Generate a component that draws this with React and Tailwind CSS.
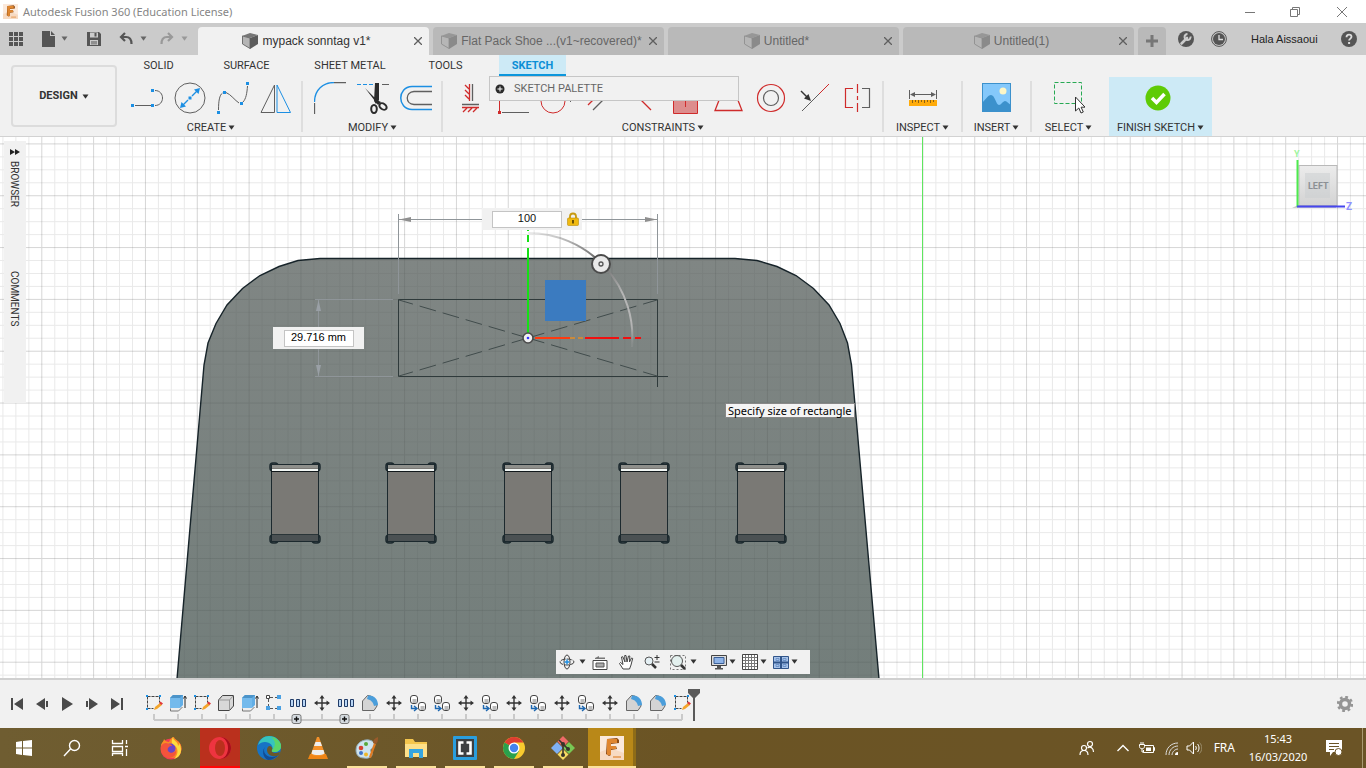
import React from "react";

const GREY = "#5f5f5f";
const BLUE = "#1c8fe3";
const RED = "#cf2b2b";

const Caret = ({ className = "text-[#333]" }) => (
  <svg width="7" height="6" viewBox="0 0 7 6" className={`shrink-0 ${className}`}>
    <path d="M.5 .5h6L3.500 4.800z" fill="currentColor" />
  </svg>
);

const Svg = ({ size = 32, children }) => (
  <svg width={size} height={size} viewBox={`0 0 ${size} ${size}`} fill="none" className="shrink-0" aria-hidden="true">
    {children}
  </svg>
);

const Dot = ({ x, y, fill = BLUE }) => <rect x={x - 1.5} y={y - 1.5} width="3" height="3" fill={fill} />;

/* ---------- title bar ---------- */

const FusionLogo = ({ size }) => (
  <svg width={size} height={size} viewBox="0 0 24 24" aria-hidden="true">
    <rect width="24" height="24" fill="#fbe9db" />
    <path d="M0 16l10-4 14 5v7H0z" fill="#f7dac2" />
    <path d="M7 3l10-1 2 2v3l-8 1v2h5l1 3-6 1v5l-2 1-3-2z" fill="#8d4a12" />
    <path d="M7 3h10v4h-6v3h5v3h-5v6H7z" fill="#e0862f" />
    <path d="M13 20h8v2h-8z" fill="#e9a76c" />
  </svg>
);

const TitleBar = () => (
  <header className="flex h-[23px] shrink-0 items-center bg-white pl-[3px]">
    <FusionLogo size={15} />
    <h1 className="ml-[5px] font-['Noto_Sans',sans-serif] text-[11px] leading-4 text-[#858585]">
      Autodesk Fusion 360 (Education License)
    </h1>
    <div className="ml-auto flex h-5 text-[#777]">
      <button aria-label="Minimize" className="flex w-[45px] items-center justify-center">
        <Svg size={12}><path d="M1 6.500h10" stroke="currentColor" /></Svg>
      </button>
      <button aria-label="Restore" className="flex w-[45px] items-center justify-center">
        <Svg size={12}><path d="M1.500 3.500h7v7h-7zM3.500 3.500v-2h7v7h-2" stroke="currentColor" /></Svg>
      </button>
      <button aria-label="Close" className="flex w-[49px] items-center justify-center">
        <Svg size={12}><path d="M1 1l10 10M11 1L1 11" stroke="currentColor" /></Svg>
      </button>
    </div>
  </header>
);

/* ---------- document tabs ---------- */

const Cube = () => (
  <Svg size={16}>
    <path d="M0 3l8-3 8 2-8 3z" fill="#777" />
    <path d="M.5 3l7.500 2v10.500l-7.500-4.500z" fill="#b5b5b5" stroke="#6f6f6f" />
    <path d="M8 5l8-3v9l-8 5z" fill="#5c5c5c" />
  </Svg>
);

const tabs = [
  { name: "mypack sonntag v1*", active: true },
  { name: "Flat Pack Shoe ...(v1~recovered)*" },
  { name: "Untitled*" },
  { name: "Untitled(1)" },
];

const AppBar = () => (
  <div className="flex h-8 shrink-0 bg-[#cbcbcb]">
    <div className="flex w-[198px] shrink-0 items-center pb-2 pl-2 pt-2 text-[#555]">
      <button aria-label="Data panel">
        <Svg size={16}>
          {[1, 6, 11].map((y) => [1, 6, 11].map((x) => <rect key={`${x}-${y}`} x={x} y={y} width="4" height="4" fill="#555" />))}
        </Svg>
      </button>
      <button aria-label="File" className="ml-4 flex items-center gap-[5px]">
        <Svg size={16}><path d="M2 0h8v5h5v11H2zM11 0l4 4h-4z" fill="#555" /></Svg>
        <Caret className="text-[#666]" />
      </button>
      <button aria-label="Save" className="ml-[18px]">
        <Svg size={16}>
          <path d="M1 1h12l2 2v12H1z" fill="#555" />
          <path d="M4 1.500h8v5H4zM4 9h8v5H4z" fill="#cbcbcb" />
          <path d="M8.500 2h2v3.500h-2zM5 10.500h6v1H5zM5 12.500h6v.8H5z" fill="#555" />
        </Svg>
      </button>
      <button aria-label="Undo" className="ml-4 flex items-center gap-[6px]">
        <Svg size={16}><path d="M7 2L3 6l4 4M3 6h5c4 0 5.500 2.500 5.500 7" stroke="#555" strokeWidth="2.200" /></Svg>
        <Caret className="text-[#666]" />
      </button>
      <button aria-label="Redo" className="ml-3 flex items-center gap-[6px] text-[#999]">
        <Svg size={16}><path d="M9 2l4 4-4 4M13 6H8c-4 0-5.500 2.500-5.500 7" stroke="#999" strokeWidth="2.200" /></Svg>
        <Caret className="text-[#999]" />
      </button>
    </div>
    <div className="flex min-w-0 flex-1 items-end gap-1">
      {tabs.map((t) => (
        <div
          key={t.name}
          className={`flex h-7 min-w-0 flex-1 items-center rounded-t px-1 ${
            t.active ? "bg-[#f1f1f1] text-[#333]" : "bg-[#b9b9b9] text-[#666]"
          }`}
        >
          <button className="flex min-w-0 flex-1 items-center justify-center gap-1 whitespace-nowrap text-[12px]">
            <span className={t.active ? "" : "opacity-50"}><Cube /></span>
            {t.name}
          </button>
          <button aria-label={`Close ${t.name}`} className="px-[3px]">
            <Svg size={8}><path d="M0 0l8 8M8 0L0 8" stroke={GREY} strokeWidth="1.300" /></Svg>
          </button>
        </div>
      ))}
      <button aria-label="New design" className="flex h-7 w-7 shrink-0 items-center justify-center rounded-t bg-[#b9b9b9]">
        <Svg size={14}><path d="M7 1v12M1 7h12" stroke="#777" strokeWidth="3" /></Svg>
      </button>
    </div>
    <div className="flex w-[200px] shrink-0 items-center pl-3 pr-[9px]">
      <button aria-label="Extensions">
        <Svg size={16}>
          <circle cx="8" cy="8" r="8" fill="#555" />
          <path d="M3.500 12.500L9 7" stroke="#cbcbcb" strokeWidth="2.600" strokeLinecap="round" />
          <path d="M12.500 5.500A3 3 0 1 1 9.500 3" stroke="#cbcbcb" strokeWidth="2" />
        </Svg>
      </button>
      <button aria-label="Job status" className="ml-[17px]">
        <Svg size={16}>
          <circle cx="8" cy="8" r="7.400" stroke="#555" />
          <circle cx="8" cy="8" r="6" fill="#555" />
          <path d="M8 4v4.500h4" stroke="#ddd" strokeWidth="1.300" />
        </Svg>
      </button>
      <button className="ml-6 whitespace-nowrap text-[11px] text-[#222]">Hala Aissaoui</button>
      <button aria-label="Help" className="ml-auto">
        <Svg size={16}>
          <circle cx="8" cy="8" r="8" fill="#555" />
          <path d="M5.500 6.300C5.500 4.500 6.600 3.700 8 3.700s2.500.9 2.500 2.100c0 1.700-2.400 1.900-2.400 3.700" stroke="#ddd" strokeWidth="1.800" />
          <path d="M7.100 11h2v2h-2z" fill="#ddd" />
        </Svg>
      </button>
    </div>
  </div>
);

/* ---------- ribbon ---------- */

const createTools = [
  ["Line", <>
    <path d="M4 23.500h16M24 8.500c10 0 10 15 0 15" stroke={GREY} />
    <Dot x={1.5} y={23.5} /><Dot x={21.5} y={23.5} /><Dot x={21.5} y={8.5} />
  </>],
  ["Circle", <>
    <circle cx="16" cy="16" r="15" stroke={GREY} />
    <path d="M9 23l5-5M18 14l5-5" stroke={BLUE} strokeWidth="1.400" />
    <path d="M26 6l-1.500 6L20 7.500zM6 26l1.500-6 4.500 4.500z" fill={BLUE} />
    <Dot x={16} y={16} />
  </>],
  ["Spline", <>
    <path d="M1.500 28c0-9 1-15 4-17M9 10.500c5 2 9 8 13 10.500M26 20c3-3 4-9 4.500-16" stroke={GREY} />
    <Dot x={1.5} y={30.5} /><Dot x={7.5} y={10.5} /><Dot x={24.5} y={21.5} /><Dot x={30.5} y={1.5} />
  </>],
  ["Mirror", <>
    <path d="M14.500 3v27.500H1z" stroke={GREY} />
    <path d="M17 3v27.500h13.500z" stroke={BLUE} />
  </>],
];

const modifyTools = [
  ["Fillet", <>
    <path d="M.5 20C.5 8 9 .5 20 .5" stroke={BLUE} strokeWidth="1.300" />
    <path d="M20 .5h12M.5 21v11" stroke={GREY} strokeWidth="1.300" />
  </>],
  ["Trim", <>
    <path d="M0 2.500h24" stroke={BLUE} strokeDasharray="4 2" />
    <path d="M25 2.500h7" stroke={GREY} />
    <path d="M18 1h4v17l-3 4-2-3zM8 6l12 12 4 2-3 3z" fill="#2b2b2b" />
    <ellipse cx="17" cy="27" rx="2.800" ry="4" stroke="#2b2b2b" strokeWidth="2" />
    <ellipse cx="26" cy="24.500" rx="4" ry="2.800" stroke="#2b2b2b" strokeWidth="2" transform="rotate(35 26 24.500)" />
  </>],
  ["Offset", <>
    <path d="M32 4.500H12C-3 5-3 27 12 27.500h20" stroke={BLUE} strokeWidth="1.500" />
    <path d="M32 9.500H14c-9 .5-9 12.500 0 13h18" stroke={GREY} strokeWidth="1.300" />
  </>],
];

const constraintTools = [
  ["Horizontal/Vertical", <>
    <path d="M15.500 2v17M8 25.500h17M11 3l4 4M11 8l4 4M11 13l4 4M9 30l4-4M14 30l4-4M19 30l4-4" stroke={RED} strokeWidth="1.300" />
    <path d="M18.500 2v17M8 22.500h17" stroke={GREY} strokeWidth="1.300" />
  </>],
  ["Coincident", <>
    <path d="M2.500 0v29" stroke={RED} />
    <path d="M5 30.500h27" stroke={GREY} />
    <Dot x={2.5} y={30.5} fill={RED} />
  </>],
  ["Tangent", <>
    <circle cx="13" cy="19" r="12" stroke={RED} />
    <path d="M28 17l3 3" stroke={GREY} />
  </>],
  ["Equal", <>
    <path d="M5 23L24 4" stroke={RED} strokeWidth="1.200" />
    <path d="M10 28l19-19" stroke={GREY} strokeWidth="1.200" />
  </>],
  ["Parallel", <path d="M6 9l19 19" stroke={RED} strokeWidth="1.200" />],
  ["Perpendicular", <>
    <path d="M4.500 8.500h24v23h-24z" fill="#dd8d8d" stroke={RED} />
    <path d="M16.500 12v13" stroke={RED} />
  </>],
  ["Fix", <path d="M3 28.500h27L22 8H11z" stroke={RED} strokeWidth="1.300" />],
  ["Concentric", <>
    <circle cx="16" cy="16" r="13.500" stroke={RED} strokeWidth="1.200" />
    <circle cx="16" cy="16" r="7.500" stroke={GREY} strokeWidth="1.200" />
  </>],
  ["Midpoint", <>
    <path d="M4 29l17-17" stroke={GREY} />
    <path d="M21 12L31 2" stroke={RED} />
    <path d="M3 9l6 6" stroke="#333" strokeWidth="1.400" />
    <path d="M13 19l-7-2.500 4.500-4.500z" fill="#333" />
  </>],
  ["Symmetry", <>
    <path d="M12 6.500H4.500v19H12M16.500 2v9M16.500 14v4M16.500 21v9" stroke={RED} strokeWidth="1.200" />
    <path d="M21 6.500h7.500v19H21" stroke={GREY} strokeWidth="1.200" />
  </>],
];

const inspectIcon = (
  <>
    <path d="M2.500 8v9M29.500 8v9M4 12.500h24" stroke={GREY} />
    <path d="M3 12.500l5-2.500v5zM29 12.500l-5-2.500v5z" fill={GREY} />
    <rect x="2" y="18" width="28" height="6" fill="#ffab0a" />
    <path d="M5.500 18v3M8.500 18v2M11.500 18v3M14.500 18v2M17.500 18v3M20.500 18v2M23.500 18v3M26.500 18v2" stroke="#8a6014" />
  </>
);

const insertIcon = (
  <>
    <rect x="1" y="1" width="29" height="29" fill="#84c8fb" />
    <path d="M1 21c3-3 6-8 9-8 4 0 5 10 8 10 2 0 4-4 6-4s4 3 6 4v7H1z" fill="#3c91cc" />
    <circle cx="22" cy="9" r="3.500" fill="#fdf6c6" />
    <rect x="1.500" y="1.500" width="28" height="28" stroke="#3c91cc" />
  </>
);

const selectIcon = (
  <>
    <path d="M1.500 .5h27v21h-27z" stroke="#27a953" strokeDasharray="4 2" />
    <path d="M22.500 15v14l3.300-3 2.200 5 2.300-1-2.200-4.800h4z" fill="#fff" stroke="#333" />
  </>
);

const finishIcon = (
  <>
    <circle cx="13" cy="16" r="12.500" fill="#5fcb06" />
    <path d="M7 16l4.500 4.500 8-8.500" stroke="#fff" strokeWidth="3.500" />
  </>
);

const GroupLabel = ({ children }) => (
  <button className="flex h-4 items-center gap-[2px] whitespace-nowrap text-[11px] text-[#333]">
    {children}
    <Caret />
  </button>
);

const ToolGroup = ({ label, tools }) => (
  <div className="ml-[5px] mr-1 flex flex-col items-center pt-[6px]">
    <div className="flex">
      {tools.map(([name, icon]) => (
        <button key={name} aria-label={name} className="flex w-[43px] justify-center">
          <Svg>{icon}</Svg>
        </button>
      ))}
    </div>
    <div className="mt-[6px]"><GroupLabel>{label}</GroupLabel></div>
  </div>
);

const SingleGroup = ({ label, icon, className }) => (
  <div className={`flex flex-col items-center ${className}`}>
    <button aria-label={label}><Svg>{icon}</Svg></button>
    <div className="mt-[6px]"><GroupLabel>{label}</GroupLabel></div>
  </div>
);

const Divider = () => <div className="mb-1 mt-[5px] w-[2px] shrink-0 bg-[#dedede]" />;

const workspaceTabs = [
  ["SOLID", "w-[79px]"],
  ["SURFACE", "w-[97px]"],
  ["SHEET METAL", "w-[110px]"],
  ["TOOLS", "w-[81px]"],
];

const Ribbon = () => (
  <div className="relative flex h-[82px] shrink-0 border-b border-[#d2d2d2] bg-[#f1f1f1] font-['Roboto',sans-serif]">
    <button className="ml-[11px] mt-[10px] flex h-[62px] w-[106px] shrink-0 items-center justify-center gap-1 rounded border-2 border-[#dcdcdc] pt-px text-[11px] font-bold text-[#333]">
      DESIGN <Caret />
    </button>
    <div className="-ml-px flex flex-1 flex-col">
      <nav className="flex h-[21px] pl-[3px] text-[11px] text-[#333]">
        {workspaceTabs.map(([name, w]) => (
          <button key={name} className={`${w} pt-[2px]`}>{name}</button>
        ))}
        <button className="ml-[13px] w-[67px] border-b-2 border-[#0c96dc] bg-[#cdeaf6] pt-[3px] font-bold text-[#0c8fd6]">SKETCH</button>
      </nav>
      <div className="flex h-[60px] pl-1">
        <ToolGroup label="CREATE" tools={createTools} />
        <Divider />
        <ToolGroup label="MODIFY" tools={modifyTools} />
        <Divider />
        <ToolGroup label="CONSTRAINTS" tools={constraintTools} />
        <Divider />
        <SingleGroup label="INSPECT" icon={inspectIcon} className="w-[77px] pt-[6px]" />
        <Divider />
        <SingleGroup label="INSERT" icon={insertIcon} className="w-[67px] pt-[6px]" />
        <Divider />
        <SingleGroup label="SELECT" icon={selectIcon} className="w-[73px] pt-[6px]" />
        <div className="ml-1 mt-px bg-[#cdeaf6]">
          <SingleGroup label="FINISH SKETCH" icon={finishIcon} className="w-[103px] pt-[5px]" />
        </div>
      </div>
    </div>
    <div className="absolute left-[489px] top-[21px] flex h-[25px] w-[250px] items-center border border-[#c6c6c6] bg-[#f1f1f1] pl-[5px] text-[11px] text-[#666]">
      <button aria-label="Expand palette">
        <Svg size={10}>
          <circle cx="5" cy="5" r="4.500" fill="#2b2b2b" />
          <path d="M5 2.500v5M2.500 5h5" stroke="#fff" />
        </Svg>
      </button>
      <span className="ml-[9px] pt-px">SKETCH PALETTE</span>
    </div>
  </div>
);

/* ---------- canvas ---------- */

const slots = [271, 387, 504, 620, 737];

const Slot = ({ x }) => (
  <g transform={`translate(${x} 463)`} stroke="#1c292e">
    <g fill="#4f5c61" strokeWidth="1.500">
      <rect x="-1" y="0" width="8" height="8" rx="3" />
      <rect x="41" y="0" width="8" height="8" rx="3" />
      <rect x="-1" y="72" width="8" height="8" rx="3" />
      <rect x="41" y="72" width="8" height="8" rx="3" />
    </g>
    <rect x=".5" y="1.500" width="47" height="77" fill="#7a7975" />
    <path d="M1 3.500h46" stroke="#8e8f8b" strokeWidth="3" />
    <path d="M1 7h46" stroke="#f2f7f5" strokeWidth="2" />
    <path d="M0 8.500h48" stroke="#11181b" />
    <path d="M1 71h46v7H1z" fill="#4b5153" stroke="none" />
    <path d="M0 71.500h48" strokeOpacity=".7" />
  </g>
);

const Drawing = () => (
  <svg className="block h-full w-full" aria-label="Sketch canvas">
    <defs>
      <pattern id="grid" x="922.400" y="143.400" width="51.830" height="51.830" patternUnits="userSpaceOnUse">
        <path d="M13.450 0v51.830M26.400 0v51.830M39.400 0v51.830M0 13.450h51.830M0 26.400h51.830M0 39.400h51.830" stroke="#000" strokeOpacity=".085" />
        <path d="M.5 0v51.830M0 .5h51.830" stroke="#000" strokeOpacity=".17" />
      </pattern>
      <linearGradient id="body" x1="0" y1="0" x2="0" y2="1">
        <stop offset="0" stopColor="#808684" />
        <stop offset="1" stopColor="#737e7b" />
      </linearGradient>
      <linearGradient id="arc" x1="528" y1="233" x2="632" y2="345" gradientUnits="userSpaceOnUse">
        <stop offset="0" stopColor="#999" stopOpacity=".2" />
        <stop offset=".45" stopColor="#606060" />
        <stop offset=".7" stopColor="#b5b5b5" />
        <stop offset=".9" stopColor="#b5b5b5" />
        <stop offset="1" stopColor="#aaa" stopOpacity=".2" />
      </linearGradient>
    </defs>
    <g transform="translate(0 -137)" fill="none">
      <rect y="137" width="100%" height="100%" fill="url(#grid)" opacity=".5" />
      <path
        d="M177 679L204 365 208 343 216 323.500 227 305 242.500 288.500 260 275.500 279 266.500 298 260.500 320 258.500H735L757 260.500 777 266.500 796 275.500 813.500 288.500 829 305 840 323.500 847.500 343 851.500 365 879 679"
        fill="url(#body)"
        stroke="#17242a"
        strokeWidth="1.400"
      />
      <rect y="137" width="100%" height="100%" fill="url(#grid)" opacity=".5" />
      <path d="M922.500 137v900" stroke="#5fe65f" />
      {slots.map((x) => <Slot key={x} x={x} />)}

      {/* dimensions */}
      <g stroke="#8f9599">
        <path d="M398.500 214v80M657.500 214v80M399 219.500h258M315 299.500h78M315 376.500h78M318.500 300v76" />
      </g>
      <path d="M399 219.500l12-2.500v5zM657 219.500l-12-2.500v5z" fill="#8f8f8f" />
      <path d="M318.500 300l-2.500 11h5zM318.500 376l-2.500-11h5z" fill="#9aa0a6" />

      {/* rectangle in progress */}
      <path d="M398.500 299.500h259v77h-259zM657.500 376v11M657 376.500h11" stroke="#2f3a3b" />
      <path d="M528 338L399 300M528 338l129-38M528 338L399 376M528 338l129 38" stroke="#414c4c" strokeDasharray="17 7" />
      <rect x="545" y="280" width="41" height="41" fill="#3b7bc0" />

      {/* manipulator */}
      <path d="M528 334v-86" stroke="#16e016" strokeWidth="2" />
      <path d="M528 242v-14" stroke="#16e016" strokeWidth="2" strokeDasharray="7 4" />
      <path d="M535 338h35" stroke="#ff3a10" strokeWidth="2" />
      <path d="M570 338h15" stroke="#c98a3c" strokeWidth="2" strokeDasharray="5 3" />
      <path d="M585 338h34M623 338h8M635 338h6" stroke="#f01010" strokeWidth="2" />
      <path d="M528 233A104.500 104.500 0 0 1 632 347" stroke="url(#arc)" strokeWidth="2" />
      <circle cx="601" cy="264" r="9" fill="#e9e9e9" stroke="#4b4b4b" strokeWidth="2" />
      <circle cx="601" cy="264" r="2" stroke="#555" strokeWidth="1.300" />
      <circle cx="528" cy="338" r="5" fill="#eee" stroke="#4b4b4b" strokeWidth="1.600" />
      <circle cx="528" cy="338" r="1.300" fill="#3333ff" />
    </g>
  </svg>
);

const ViewCube = () => (
  <svg width="70" height="70" viewBox="0 0 70 70" className="absolute right-[6px] top-[8px]" fontFamily="Roboto, sans-serif" aria-label="View cube">
    <defs>
      <linearGradient id="cube" x1="0" y1="0" x2="0" y2="1">
        <stop offset="0" stopColor="#ececec" />
        <stop offset="1" stopColor="#d3d3d3" />
      </linearGradient>
    </defs>
    <path d="M2 63h44v-3H8z" fill="#ccc" />
    <rect x="9" y="20.500" width="38" height="40" fill="url(#cube)" stroke="#b9b9b9" />
    <rect x="15" y="28" width="25" height="25" fill="#c9cdd0" fillOpacity=".5" />
    <path d="M7.500 15v47" stroke="#4dea4d" strokeWidth="2" />
    <path d="M7 61.500h48" stroke="#4646ee" strokeWidth="2" />
    <text x="4" y="12" fontSize="9" fontWeight="bold" fill="#9df59d">Y</text>
    <text x="56" y="65" fontSize="10" fontWeight="bold" fill="#9090ff">Z</text>
    <text x="18" y="44" fontSize="9" fontWeight="bold" fill="#8c9094">LEFT</text>
  </svg>
);

const navTools = [
  ["Orbit", <>
    <ellipse cx="8" cy="8" rx="7" ry="3" stroke="#444" strokeDasharray="5 1" />
    <ellipse cx="8" cy="8" rx="3" ry="7" stroke="#444" />
    <path d="M8 5.500v5M5.500 8h5" stroke={BLUE} strokeWidth="1.400" />
  </>, "gap-1"],
  ["Look at", <>
    <path d="M1 6.500h14v9H1z" fill="#fff" stroke="#444" />
    <path d="M4 9h8v4H4z" fill="#aaa" stroke="#555" />
    <path d="M3 4l4-2v1.500h6V5H3z" fill="#777" />
  </>, null, "ml-[6px]"],
  ["Pan", <path d="M5 15L1.500 9.500l1-1L5 10.500 3.500 3l1.300-.3L7 8l-.3-6.500H8L9 8l1.500-6h1.300L11.500 8l2-4 1.200.4L13 11l-1.500 4z" fill="#fff" stroke="#444" />, null, "ml-[10px]"],
  ["Zoom", <>
    <circle cx="5" cy="7" r="4" fill="#e5f0f4" stroke="#555" />
    <path d="M8 10l4 4" stroke="#333" strokeWidth="2.500" />
    <path d="M13 1v5M10.500 3.500h5M10.500 8h5" stroke="#333" />
  </>, null, "ml-[10px]"],
  ["Fit", <>
    <path d="M.5 1.500h15v14H.5z" stroke="#777" strokeDasharray="2 2" />
    <circle cx="7" cy="7" r="5.500" fill="#e3f0ee" stroke="#555" />
    <path d="M11 11l4 4" stroke="#333" strokeWidth="2.600" />
  </>, "gap-1", "ml-[10px]"],
  ["Display settings", <>
    <path d="M.5 1.500h15v10H.5z" fill="#ddd" stroke="#444" />
    <path d="M3 3.500h10v6H3z" fill="#8fb4e8" stroke="#3b5f96" />
    <path d="M6 12h4v2h2v1.500H4V14h2z" fill="#555" />
  </>, "gap-[2px]", "ml-[14px]"],
  ["Grid and snaps", <>
    <path d="M.5.500h15v15H.5z" fill="#fff" stroke="#444" />
    <path d="M3.500 1v14M6.500 1v14M9.500 1v14M12.500 1v14M1 3.500h14M1 6.500h14M1 9.500h14M1 12.500h14" stroke="#777" />
  </>, "gap-[2px]", "ml-[6px]"],
  ["Viewports", <>
    <path d="M.5 2.500h15v12H.5z" fill="#a9c4ea" stroke="#31558a" />
    <path d="M8 2v12M.5 8.500h15" stroke="#31558a" strokeWidth="2" />
    <path d="M3 4.500h3v2H3zM10 4.500h3v2h-3zM3 10.500h3v2H3zM10 10.500h3v2h-3z" stroke="#6d93c8" />
  </>, "gap-[2px]", "ml-[6px]"],
];

const NavBar = () => (
  <div className="absolute inset-x-0 bottom-1 flex justify-center">
    <div className="flex h-6 w-[254px] items-center bg-[#f1f1f1] pl-[3px]">
      {navTools.map(([name, icon, menu, margin = ""]) => (
        <button key={name} aria-label={name} className={`flex items-center ${menu || ""} ${margin}`}>
          <Svg size={16}>{icon}</Svg>
          {menu && <Caret />}
        </button>
      ))}
    </div>
  </div>
);

const Lock = () => (
  <Svg size={14}>
    <path d="M4 7V4.500a3 3 0 0 1 6 0V7" stroke="#c79a12" strokeWidth="1.800" />
    <rect x="1.500" y="6" width="11" height="7.500" rx="1" fill="#f0b90f" stroke="#b98b08" strokeWidth=".6" />
    <path d="M6.200 8h1.600v3.500H6.200z" fill="#4b3800" />
  </Svg>
);

const Canvas = () => (
  <main className="relative min-h-0 flex-1 overflow-hidden bg-white">
    <div className="absolute inset-0"><Drawing /></div>

    <aside className="absolute left-1 top-1 flex h-[262px] w-[22px] flex-col items-center bg-[#f1f1f1] pr-px pt-[7px] font-['Roboto',sans-serif] text-[10px] text-[#333]">
      <button aria-label="Expand browser">
        <svg width="10" height="8" viewBox="0 0 10 8" className="block"><path d="M0 1l5 3-5 3zM5 1l5 3-5 3z" fill="#222" /></svg>
      </button>
      <button className="mt-[5px] [writing-mode:vertical-rl]">BROWSER</button>
      <button className="mt-[64px] [writing-mode:vertical-rl]">COMMENTS</button>
    </aside>

    <div className="absolute left-[482px] top-[71px] flex h-[22px] w-[100px] items-center bg-[#f1f1f1] pl-[10px]">
      <input aria-label="Width" defaultValue="100" className="h-[17px] w-[70px] border border-[#c4c4c4] bg-white pb-[2px] text-center text-[11px] text-[#111]" />
      <button aria-label="Unlock width" className="ml-1"><Lock /></button>
    </div>
    <div className="absolute left-[273px] top-[190px] flex h-[22px] w-[91px] items-center justify-center bg-[#f1f1f1]">
      <input aria-label="Height" defaultValue="29.716 mm" className="h-[17px] w-[70px] border border-[#c4c4c4] bg-white pb-[2px] text-center text-[11px] text-black" />
    </div>

    <div role="tooltip" className="absolute left-[725px] top-[266px] whitespace-nowrap border border-[#888] bg-[#f4f4f4] px-[2px] font-['Noto_Sans',sans-serif] text-[11px] leading-[13px] text-black">
      Specify size of rectangle
    </div>

    <ViewCube />
    <NavBar />
  </main>
);

/* ---------- timeline ---------- */

const featureIcons = {
  sketch: <>
    <path d="M2.500 2.500h12M2.500 2.500v12M14.500 2.500v6M2.500 14.500h6" stroke="#444" strokeDasharray="3 1" />
    <path d="M1 1h2v2H1zM14 1h2v2h-2zM1 14h2v2H1z" fill={BLUE} />
    <path d="M9 16l1-3 5-4 2 2-5 4z" fill="#f3a52c" />
    <path d="M14 9l1.500-1.500L18 9.500 16.500 11z" fill="#e0393c" />
  </>,
  extrude: <>
    <path d="M1.500 14.500v2.500h8l4-4" fill="#eee" stroke="#777" />
    <path d="M1 4l3-3h10v10l-3 3H1z" fill="#62aee6" />
    <path d="M1 4h10v10H1z" fill="#74baec" />
    <path d="M1 4l3-3h10l-3 3z" fill="#4c94c9" />
    <path d="M16 14V3M14.500 4.500L16 2l1.500 2.500" stroke="#222" />
  </>,
  box: <>
    <path d="M1.500 6l4-4.500h11V12l-4 4.500h-11z" fill="#d8d8d8" stroke="#444" />
    <path d="M1.500 6h11v10.500M12.500 6l4-4.500" stroke="#999" />
  </>,
  pattern: <>
    <path d="M5 3.500h7M3.500 5v8M5 14.500h8" stroke="#555" strokeDasharray="3 2" />
    <path d="M1.500 1.500h3v3h-3z" fill="#fff" stroke="#444" />
    <path d="M12 1h4v4h-4zM1 12h4v4H1zM12 12h4v4h-4z" fill="#4ba1e3" />
  </>,
  array: <path d="M1.500 5.500h3v7h-3zM7.500 5.500h3v7h-3zM13.500 5.500h3v7h-3z" fill="#b9d6f5" stroke="#1f3a66" />,
  move: <>
    <path d="M9 3v12M3 9h12" stroke="#333" strokeWidth="1.400" />
    <path d="M9 1l2.500 3.500h-5zM9 17l2.500-3.500h-5zM1 9l3.500-2.500v5zM17 9l-3.500-2.500v5z" fill="#333" />
  </>,
  fillet: <>
    <path d="M1.500 16.500V7l5-5.500C12 1.500 16 6 16 12l-3 4.500z" fill="#d4d4d4" stroke="#666" />
    <path d="M7 1.500C13 1 17 5 17 11l-4 1C12 8 10 6 6 5z" fill="#4b9edb" />
  </>,
  copy: <>
    <rect x="1.500" y="1.500" width="7" height="8" rx="2.500" fill="#fff" stroke="#444" />
    <rect x="9.500" y="8.500" width="7" height="8" rx="2.500" fill="#fff" stroke="#444" />
    <path d="M3.500 5h4v4h-4zM11.500 12h4v4h-4z" fill="#bbb" />
    <path d="M2.500 11v3.500H7M5 12l3 2.500L5 17" stroke="#1d67b0" strokeWidth="1.400" />
  </>,
};

const features = [
  "sketch", "extrude", "sketch", "box", "extrude", "pattern", "array", "move", "array", "fillet", "move", "copy",
  "copy", "move", "copy", "move", "copy", "move", "copy", "move", "fillet", "fillet", "sketch",
];

const playback = [
  ["First", "M2 2h2v12H2zM14 2v12L5 8z"],
  ["Step back", "M11 2v12L2 8zM12 5h2v6h-2z"],
  ["Play", "M3 1l11 7-11 7z"],
  ["Step forward", "M5 2v12l9-6zM2 5h2v6H2z"],
  ["Last", "M2 2v12l9-6zM12 2h2v12h-2z"],
];

const Timeline = () => (
  <div className="flex h-[50px] shrink-0 border-t-2 border-[#d0d0d0] bg-[#f1f1f1]">
    <div className="flex h-12 items-center gap-[9px] pl-[9px] pr-[17px]">
      {playback.map(([name, d]) => (
        <button key={name} aria-label={name}>
          <Svg size={16}><path d={d} fill="#4a4a4a" /></Svg>
        </button>
      ))}
    </div>
    <div className="flex pt-[14px]">
      {features.map((f, i) => (
        <div key={i} className="flex w-6 flex-col items-center">
          <button aria-label={f}><Svg size={18}>{featureIcons[f]}</Svg></button>
          <svg width="24" height="10" viewBox="0 0 24 10" className="mt-[2px] shrink-0">
            <path d={i === 0 ? "M12 6h12" : i === features.length - 1 ? "M0 6h12" : "M0 6h24"} stroke="#cacaca" strokeWidth="2" />
            {f === "array" ? (
              <g>
                <rect x="6" y=".5" width="9" height="9" rx="2" fill="#d5dbe0" stroke="#777" />
                <path d="M10.500 2.500v5M8 5h5" stroke="#111" strokeWidth="1.400" />
              </g>
            ) : (
              <path d="M12 0v6" stroke="#cacaca" strokeWidth="2" />
            )}
          </svg>
        </div>
      ))}
    </div>
    <svg width="12" height="32" viewBox="0 0 12 32" className="-ml-[6px] mt-[9px]">
      <path d="M0 0h12v4L7 9v23H5V9L0 4z" fill="#5a5a5a" />
    </svg>
    <button aria-label="Timeline settings" className="ml-auto mr-[13px]">
      <Svg size={16}>
        <circle cx="8" cy="8" r="4.500" stroke="#959595" strokeWidth="3.400" />
        <circle cx="8" cy="8" r="7" stroke="#959595" strokeWidth="2.400" strokeDasharray="2.750 2.750" />
      </Svg>
    </button>
  </div>
);

/* ---------- taskbar ---------- */

const Art = ({ children }) => <Svg size={24}>{children}</Svg>;

const system = [
  ["Start", <path d="M4 6l6-1v6.500H4zM11 5l9-1v7.500h-9zM4 12.500h6V19l-6-1zM11 12.500h9V20l-9-1z" fill="#fff" />],
  ["Search", <path d="M4 20l6.500-7M14.500 4.500a5 5 0 1 1 0 10 5 5 0 0 1 0-10z" stroke="#fff" strokeWidth="1.400" />],
  ["Task view", <path d="M4.500 4v3.500h10V4M4.500 10.500h10v5h-10zM4.500 20v-2.500h10V20M18.500 4v4M18.500 13v7M17 10.500h3" stroke="#fff" strokeWidth="1.300" />],
];

const apps = [
  ["Firefox", <>
    <circle cx="12" cy="13" r="10.500" fill="#f23a55" />
    <path d="M2 9c1-3 3-4 3-6 1 2 3 3 5 3 1-3 3-5 5-5 0 3 8 4 7.500 12-.5 6-5 9-10 9C6 22 1 17 2 9z" fill="#fb8b25" />
    <path d="M14 1c0 4 5 4 5 9 1-1 1-2 1-3 4 7 2 14-5 16 4-4 5-10 1-13-2-1-5-3-2-9z" fill="#fddc3f" />
    <circle cx="11.500" cy="12.500" r="5" fill="#6b45c6" />
    <path d="M2 10c2-3 5-4 8-2 2 0 3 1 3 2-3 0-5 2-4 5 2 3 7 2 8-1 1 5-3 8-7 8-6-1-9-6-8-12z" fill="#f4543b" />
  </>, "none"],
  ["Opera", <>
    <circle cx="12" cy="12" r="11" fill="#ee3440" />
    <path d="M12 1a11 11 0 0 1 0 22c5-1 8-5 8-11S17 2 12 1z" fill="#a70f1c" />
    <ellipse cx="12" cy="12" rx="5" ry="8" fill="#ba301d" />
  </>, "opera"],
  ["Edge", <>
    <circle cx="12" cy="12" r="12" fill="#1773c5" />
    <path d="M1 9C3 3 7 0 12 0c7 0 12 5 12 10 0 4-3 6-7 6-2 0-3-1-2-2 2-4-2-8-7-8-3 0-5 1-7 3z" fill="#36c4bd" />
    <path d="M14 1c6 1 10 5 10 9 0 4-3 6-7 6-2 0-3-1-2-2 4-4 4-9-1-13z" fill="#5bd568" />
    <path d="M9 10c-4 3-2 11 6 11 3 0 5-1 7-3-3 4-7 6-11 6C6 22 4 14 9 10z" fill="#134c93" />
    <path d="M15 14c-1 1 0 3 4 3l4-1-1 3c-6 3-12 0-12-5 0-2 1-4 3-4 2 1 3 2 2 4z" fill="#6b5828" />
  </>, "none"],
  ["VLC", <>
    <path d="M4 18h16l2 5H2z" fill="#f08515" />
    <path d="M11 1h2l6 17c-3 3-11 3-14 0z" fill="#f4912a" />
    <path d="M9.500 6h5l1.500 4H8zM6.500 14h11l1 3.500c-3 2-10 2-13 0z" fill="#eee" />
  </>, "none"],
  ["Paint", <>
    <path d="M1 14C1 7 8 3 14 4c6 1 7 6 4 8-3 1-3 3-1 5 1 4-4 6-8 5-5 0-8-3-8-8z" fill="#cfe4ee" stroke="#8fa9b5" />
    <circle cx="6" cy="12" r="2.300" fill="#d8412f" /><circle cx="11" cy="8" r="2" fill="#58a83b" />
    <circle cx="6" cy="17" r="2" fill="#3f74c9" /><circle cx="11" cy="18.500" r="2" fill="#f0b826" />
    <path d="M14 21l5-14 2 1-5 14z" fill="#e07b22" />
    <path d="M18 7c0-3 2-5 5-6 0 3 0 5-2 7z" fill="#9a5b2b" />
  </>, "line"],
  ["File Explorer", <>
    <path d="M1 3h8l2 3h12v15H1z" fill="#f5c64d" />
    <path d="M1 8h22v13H1z" fill="#fde08a" />
    <path d="M5 13h14v9h-4v-5H9v5H5z" fill="#35a5e0" />
  </>, "line"],
  ["Brackets", <>
    <rect width="24" height="24" rx="1" fill="#2a9ede" />
    <rect x="3" y="3" width="18" height="18" fill="#3d3f42" />
    <path d="M10.500 6.500h-4v11h4M13.500 6.500h4v11h-4" stroke="#fff" strokeWidth="2.600" />
  </>, "line"],
  ["Chrome", <>
    <circle cx="12" cy="12" r="11" fill="#f9ca2e" />
    <path d="M12 12L2.500 6.500A11 11 0 0 1 21.500 6.500H12z" fill="#df3d31" />
    <path d="M12 12L2.500 6.500A11 11 0 0 0 12 23l5-8z" fill="#2aa04d" />
    <circle cx="12" cy="12" r="5.500" fill="#fff" /><circle cx="12" cy="12" r="4.200" fill="#4483ee" />
  </>, "line"],
  ["Git", <>
    <path d="M12 0l5.500 5.500L12 11 6.500 5.500z" fill="#ee6a68" />
    <path d="M6 6l6 6-6 6-6-6z" fill="#7fb0f3" />
    <path d="M18 6l6 6-6 6-6-6z" fill="#78c854" />
    <path d="M12 13l5.500 5.500L12 24l-5.500-5.500z" fill="#f7dc63" />
    <path d="M8 4l4 4v11M12 8l5 5" stroke="#37352c" strokeWidth="1.600" />
    <circle cx="12" cy="8" r="2" fill="#37352c" /><circle cx="17" cy="13" r="2" fill="#37352c" /><circle cx="12" cy="19" r="2" fill="#37352c" />
  </>, "line"],
];

const appStyle = {
  none: "",
  opera: "border-b-2 border-[#ff0505] bg-[#ba301d] pt-[2px]",
  line: "border-b-2 border-[#fbe29b] pt-[2px]",
};

const Taskbar = () => (
  <footer className="flex h-10 shrink-0 items-stretch bg-linear-to-r from-[#6f5d31] via-[#6b5424] to-[#6b5426] font-['Noto_Sans',sans-serif] text-[12px] text-white">
    {system.map(([name, icon]) => (
      <button key={name} aria-label={name} className="flex w-12 items-center justify-center">
        <Art>{icon}</Art>
      </button>
    ))}
    <div className="ml-[7px] flex gap-[9px]">
      {apps.map(([name, icon, kind]) => (
        <button key={name} aria-label={name} className={`flex w-10 items-center justify-center ${appStyle[kind]}`}>
          <Art>{icon}</Art>
        </button>
      ))}
    </div>
    <button aria-label="Fusion 360" className="ml-[5px] flex w-12 border-b-2 border-[#fbe29b] bg-[#8f6c17]">
      <span className="flex h-full w-[45px] items-center justify-center bg-[#b98818] pl-[3px] pt-[2px]"><FusionLogo size={24} /></span>
    </button>
    <div className="ml-auto flex items-center">
      <button aria-label="People">
        <Svg size={16}>
          <path d="M1 15c0-6 8-6 8 0M5 10.500a2.500 2.500 0 1 0 0-5 2.500 2.500 0 0 0 0 5zM11 6.500a2.500 2.500 0 1 0 0-5 2.500 2.500 0 0 0 0 5zM8.500 8c3-2 6 0 6 4" stroke="#fff" strokeWidth="1.200" />
        </Svg>
      </button>
      <button aria-label="Show hidden icons" className="ml-5">
        <Svg size={16}><path d="M2.500 11L8 5.500 13.500 11" stroke="#fff" strokeWidth="1.400" /></Svg>
      </button>
      <button aria-label="Battery" className="ml-2">
        <Svg size={16}>
          <path d="M6 5.500h8.500v7H4.500V10M14.500 7.500h1v3h-1M.5 4.500h5v2c0 3-5 3-5 0zM2 2v2M4 2v2M3 9v3h2" stroke="#fff" />
          <path d="M7 7.500h5v3.500H7z" fill="#fff" />
        </Svg>
      </button>
      <button aria-label="Network" className="ml-[9px]">
        <Svg size={16}>
          <path d="M2 15C2 8 7 3 14 3M5 15c0-5 4-9 9-9M8 15c0-3 3-6 6-6" stroke="#ddd" />
          <path d="M11 15c0-2 1-3 3-3v3z" fill="#fff" />
        </Svg>
      </button>
      <button aria-label="Volume" className="ml-[6px]">
        <Svg size={16}>
          <path d="M1 6h2.500l4-4v12l-4-4H1z" stroke="#fff" />
          <path d="M9.500 6c1 1 1 3 0 4M11.500 4c2 2 2 6 0 8" stroke="#fff" />
          <path d="M13.500 2.500c3 3 3 8 0 11" stroke="#998b6a" />
        </Svg>
      </button>
      <button className="ml-3">FRA</button>
      <button className="ml-3 w-[62px] text-center text-[11px] leading-[18px]">
        <time className="block">15:43</time>
        <time className="block">16/03/2020</time>
      </button>
      <button aria-label="Notifications" className="ml-4">
        <Svg size={18}>
          <path d="M1 1h16v12H8l-3 4v-4H1z" fill="#fff" />
          <path d="M4 4.500h10M4 7.500h10M4 10.500h5" stroke="#6b5426" />
          <circle cx="13.500" cy="13" r="3.500" fill="#fff" stroke="#6b5426" />
        </Svg>
      </button>
      <div className="ml-[19px] mr-[3px] h-10 w-px bg-[#a99a72]" />
    </div>
  </footer>
);

export default function App() {
  return (
    <div className="flex h-screen flex-col overflow-hidden bg-[#f1f1f1] font-['Liberation_Sans',Arial,sans-serif]">
      <TitleBar />
      <AppBar />
      <Ribbon />
      <Canvas />
      <Timeline />
      <Taskbar />
    </div>
  );
}
